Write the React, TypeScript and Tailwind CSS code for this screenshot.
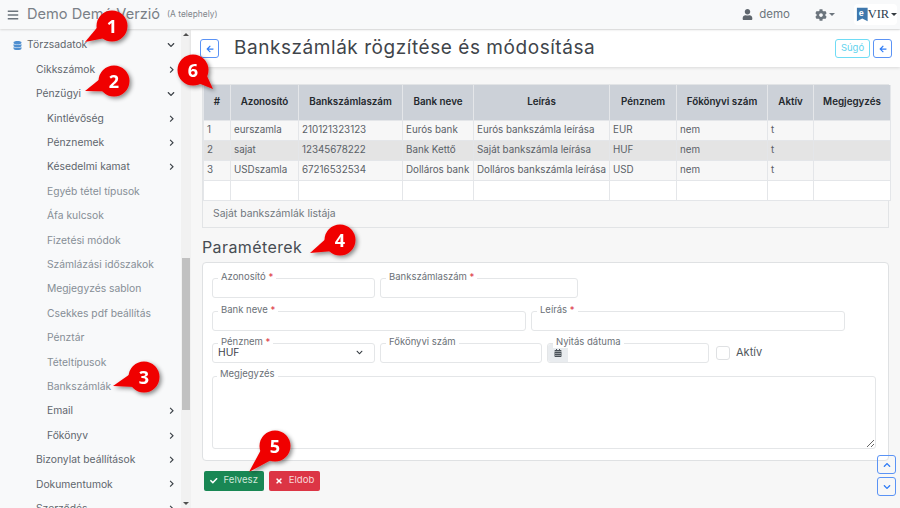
import React from 'react'
import {
  FaBars,
  FaCalendarAlt,
  FaCheck,
  FaChevronDown,
  FaChevronRight,
  FaChevronUp,
  FaCog,
  FaDatabase,
  FaTimes,
  FaUser,
  FaArrowLeft,
} from 'react-icons/fa'

const menu: { label: string; level: 0 | 1 | 2; arrow?: 'right' | 'down'; muted?: boolean }[] = [
  { label: 'Törzsadatok', level: 0, arrow: 'down' },
  { label: 'Cikkszámok', level: 1, arrow: 'right' },
  { label: 'Pénzügyi', level: 1, arrow: 'down' },
  { label: 'Kintlévőség', level: 2, arrow: 'right' },
  { label: 'Pénznemek', level: 2, arrow: 'right' },
  { label: 'Késedelmi kamat', level: 2, arrow: 'right' },
  { label: 'Egyéb tétel típusok', level: 2, muted: true },
  { label: 'Áfa kulcsok', level: 2, muted: true },
  { label: 'Fizetési módok', level: 2, muted: true },
  { label: 'Számlázási időszakok', level: 2, muted: true },
  { label: 'Megjegyzés sablon', level: 2, muted: true },
  { label: 'Csekkes pdf beállítás', level: 2, muted: true },
  { label: 'Pénztár', level: 2, muted: true },
  { label: 'Tételtípusok', level: 2, muted: true },
  { label: 'Bankszámlák', level: 2, muted: true },
  { label: 'Email', level: 2, arrow: 'right' },
  { label: 'Főkönyv', level: 2, arrow: 'right' },
  { label: 'Bizonylat beállítások', level: 1, arrow: 'right' },
  { label: 'Dokumentumok', level: 1, arrow: 'right' },
  { label: 'Szerződés', level: 1, arrow: 'right' },
]

const columns = [
  { title: '#', width: 'w-[27px]' },
  { title: 'Azonosító', width: 'w-[68px]' },
  { title: 'Bankszámlaszám', width: 'w-[104px]' },
  { title: 'Bank neve', width: 'w-[71px]' },
  { title: 'Leírás', width: 'w-[136px]' },
  { title: 'Pénznem', width: 'w-[67px]' },
  { title: 'Főkönyvi szám', width: 'w-[91px]' },
  { title: 'Aktív', width: 'w-[46px]' },
  { title: 'Megjegyzés', width: 'w-[77px]' },
]

const rows = [
  ['1', 'eurszamla', '210121323123', 'Eurós bank', 'Eurós bankszámla leírása', 'EUR', 'nem', 't', ''],
  ['2', 'sajat', '12345678222', 'Bank Kettő', 'Saját bankszámla leírása', 'HUF', 'nem', 't', ''],
  ['3', 'USDszamla', '67216532534', 'Dolláros bank', 'Dolláros bankszámla leírása', 'USD', 'nem', 't', ''],
  ['', '', '', '', '', '', '', '', ''],
]

// piros számozott buborékok a képernyőkép fölött
const callouts = [
  { n: '1', cx: 112, cy: 26, tx: 85, ty: 42 },
  { n: '2', cx: 114, cy: 81, tx: 85, ty: 91 },
  { n: '3', cx: 144, cy: 377, tx: 113, ty: 386 },
  { n: '4', cx: 340, cy: 240, tx: 310, ty: 253 },
  { n: '5', cx: 275, cy: 446, tx: 249, ty: 472 },
  { n: '6', cx: 193, cy: 70, tx: 213, ty: 89 },
]

function tailPoints(c: { cx: number; cy: number; tx: number; ty: number }) {
  const dx = c.tx - c.cx
  const dy = c.ty - c.cy
  const len = Math.hypot(dx, dy)
  const px = (-dy / len) * 11
  const py = (dx / len) * 11
  return `${c.cx + px},${c.cy + py} ${c.tx},${c.ty} ${c.cx - px},${c.cy - py}`
}

function Callouts() {
  return (
    <svg className="absolute inset-0 z-20 pointer-events-none" width="900" height="508" viewBox="0 0 900 508">
      <defs>
        <filter id="callout-shadow" x="-30%" y="-30%" width="170%" height="170%">
          <feDropShadow dx="2" dy="2" stdDeviation="2" floodColor="#000" floodOpacity="0.45" />
        </filter>
      </defs>
      {callouts.map((c) => (
        <g key={c.n} filter="url(#callout-shadow)">
          <polygon points={tailPoints(c)} fill="#f00000" />
          <circle cx={c.cx} cy={c.cy} r="15.5" fill="#f00000" />
          <text
            x={c.cx}
            y={c.cy + 6.5}
            textAnchor="middle"
            fontSize="18"
            fontWeight="700"
            fill="#fff"
            fontFamily="'Open Sans', sans-serif"
          >
            {c.n}
          </text>
        </g>
      ))}
    </svg>
  )
}

function Field({
  label,
  required,
  className,
  children,
}: {
  label: string
  required?: boolean
  className: string
  children?: React.ReactNode
}) {
  return (
    <div className={`relative h-[20px] rounded-[3px] border border-[#e4e6e8] bg-white ${className}`}>
      <span className="absolute left-[5px] top-[-8px] bg-white px-[3px] text-[9.5px] leading-[12px] text-[#6b7177] whitespace-nowrap">
        {label}
        {required && <span className="text-[#dc3545]"> *</span>}
      </span>
      {children}
    </div>
  )
}

function Sidebar() {
  return (
    <aside className="relative w-[191px] shrink-0 overflow-hidden bg-[#f8f9fa] pt-[3px]">
      <div className="w-[181px]">
        {menu.map((item) => (
          <div
            key={item.label}
            className={`flex h-[24.4px] items-center pr-[6px] text-[10.3px] ${
              item.level === 0 ? 'pl-[13px]' : item.level === 1 ? 'pl-[36px]' : 'pl-[47px]'
            } ${item.muted ? 'text-[#868e96]' : 'text-[#5f666d]'}`}
          >
            {item.level === 0 && <FaDatabase className="mr-[5px] text-[9px] text-[#4f8fd0]" />}
            <span className="flex-1 whitespace-nowrap">{item.label}</span>
            {item.arrow === 'right' && <FaChevronRight className="text-[7.5px] text-[#3d4349]" />}
            {item.arrow === 'down' && <FaChevronDown className="text-[8px] text-[#3d4349]" />}
          </div>
        ))}
      </div>
      <div className="absolute bottom-0 right-0 top-0 flex w-[10px] flex-col items-center bg-[#f1f1f1]">
        <span className="mt-[3px] h-0 w-0 border-x-[3px] border-b-[3px] border-x-transparent border-b-[#505050]" />
        <span className="mt-[222px] h-[152px] w-[8px] bg-[#c1c1c1]" />
        <span className="mt-auto mb-[3px] h-0 w-0 border-x-[3px] border-t-[3px] border-x-transparent border-t-[#505050]" />
      </div>
    </aside>
  )
}

export default function App() {
  return (
    <div className="relative flex h-[508px] w-[900px] flex-col overflow-hidden bg-[#f7f7f7] font-['Inter',sans-serif] text-[#495057]">
      <header className="z-10 flex h-[29px] shrink-0 items-center bg-[#f8f9fa] pl-[7px] pr-[3px] shadow-[0_1px_2px_rgba(0,0,0,0.12)]">
        <FaBars className="text-[12px] text-[#6c757d]" />
        <span className="ml-[8px] text-[14.6px] text-[#7a8087]">Demo Demó Verzió</span>
        <span className="ml-[7px] text-[8.4px] text-[#7f858b]">(A telephely)</span>
        <FaUser className="ml-auto text-[11px] text-[#5f666d]" />
        <span className="ml-[6px] text-[11.5px] text-[#6c757d]">demo</span>
        <FaCog className="ml-[25px] text-[12px] text-[#6c757d]" />
        <span className="ml-[2px] h-0 w-0 border-x-[3px] border-t-[3px] border-x-transparent border-t-[#6c757d]" />
        <div className="ml-[19px] flex h-[21px] w-[43px] items-center rounded-[4px] bg-white pl-[2px]">
          <svg width="38" height="18" viewBox="0 0 38 18">
            <polygon points="1,1 13,1 13,16 7,13 1,16" fill="#3f78ad" />
            <text x="3" y="10" fontSize="10" fill="#fff" fontFamily="'Liberation Sans', sans-serif" fontWeight="700">
              e
            </text>
            <text x="13" y="12" fontSize="14" fill="#2c3e50" fontFamily="'Liberation Serif', serif">
              VIR
            </text>
          </svg>
          <span className="ml-[1px] h-0 w-0 border-x-[3px] border-t-[3px] border-x-transparent border-t-[#343a40]" />
        </div>
      </header>

      <div className="flex min-h-0 flex-1 pt-px">
        <Sidebar />

        <main className="relative min-w-0 flex-1">
          <div className="flex h-[37px] items-center bg-white pl-[9px] pr-[8px] shadow-[0_1px_3px_rgba(0,0,0,0.12)]">
            <button className="flex h-[19px] w-[19px] items-center justify-center rounded-[3px] border border-[#5b93f5] text-[#2f7cf6]">
              <FaArrowLeft className="text-[8px]" />
            </button>
            <h1 className="ml-[15px] text-[19px] font-normal tracking-[0.55px] text-[#3f454b]">
              Bankszámlák rögzítése és módosítása
            </h1>
            <button className="ml-auto h-[19px] w-[35px] rounded-[3px] border border-[#6fdcf5] text-[9.5px] text-[#5fd3ee]">
              Súgó
            </button>
            <button className="ml-[3px] flex h-[19px] w-[19px] items-center justify-center rounded-[3px] border border-[#5b93f5] text-[#2f7cf6]">
              <FaArrowLeft className="text-[8px]" />
            </button>
          </div>

          <div className="pl-[11px] pr-[11px] pt-[17px]">
            <div className="border border-[#e2e4e6]">
              <table className="w-full table-fixed border-collapse text-[9.8px]">
                <colgroup>
                  {columns.map((c) => (
                    <col key={c.title} className={c.width} />
                  ))}
                </colgroup>
                <thead>
                  <tr className="h-[35px] bg-[#ccd1d8] text-[#23282d]">
                    {columns.map((c) => (
                      <th key={c.title} className="border-x border-[#e4e6e9] font-semibold">
                        {c.title}
                      </th>
                    ))}
                  </tr>
                </thead>
                <tbody>
                  {rows.map((row, i) => (
                    <tr
                      key={i}
                      className={`h-[20px] ${i === 1 ? 'bg-[#e4e4e4]' : i === 3 ? 'bg-white' : 'bg-[#f7f7f7]'}`}
                    >
                      {row.map((cell, j) => (
                        <td
                          key={j}
                          className="overflow-hidden whitespace-nowrap border border-[#e4e6e9] px-[3px] text-[#5a6167]"
                        >
                          {cell}
                        </td>
                      ))}
                    </tr>
                  ))}
                </tbody>
              </table>
              <div className="flex h-[26px] items-center pl-[10px] text-[10.4px] text-[#70767c]">
                Saját bankszámlák listája
              </div>
            </div>

            <h2 className="mt-[8px] h-[26px] text-[16px] leading-[22px] tracking-[0.4px] text-[#474d53]">
              Paraméterek
            </h2>

            <div className="h-[199px] rounded-[4px] border border-[#dfe1e3] bg-white pl-[9px] pt-[15px]">
              <div className="flex gap-[5px]">
                <Field label="Azonosító" required className="w-[163px]" />
                <Field label="Bankszámlaszám" required className="w-[198px]" />
              </div>
              <div className="mt-[13px] flex gap-[5px]">
                <Field label="Bank neve" required className="w-[314px]" />
                <Field label="Leírás" required className="w-[314px]" />
              </div>
              <div className="mt-[12px] flex items-center gap-[5px]">
                <Field label="Pénznem" required className="w-[163px]">
                  <div className="flex h-full items-center justify-between pl-[5px] pr-[11px] text-[10.3px] text-[#3f454b]">
                    HUF
                    <FaChevronDown className="text-[7px] text-[#343a40]" />
                  </div>
                </Field>
                <Field label="Főkönyvi szám" className="w-[162px]" />
                <Field label="Nyitás dátuma" className="w-[162px]">
                  <div className="flex h-full w-[20px] items-center justify-center rounded-l-[3px] bg-[#e9ecef]">
                    <FaCalendarAlt className="text-[8px] text-[#495057]" />
                  </div>
                </Field>
                <span className="ml-[2px] h-[14px] w-[14px] rounded-[3px] border border-[#dfe1e3] bg-white" />
                <span className="ml-[1px] text-[11px] text-[#50565c]">Aktív</span>
              </div>
              <div className="relative mt-[13px] h-[73px] w-[664px]">
                <span className="absolute left-[5px] top-[-8px] z-10 bg-white px-[3px] text-[9.5px] leading-[12px] text-[#6b7177]">
                  Megjegyzés
                </span>
                <textarea className="block h-full w-full rounded-[3px] border border-[#e4e6e8] bg-white" />
              </div>
            </div>

            <div className="mt-[10px] flex gap-[5px] pl-[2px]">
              <button className="flex h-[20px] w-[60px] items-center justify-center gap-[6px] rounded-[2px] bg-[#198754] text-[9.6px] text-[#cfe6da]">
                <FaCheck className="text-[7.5px] text-white" /> Felvesz
              </button>
              <button className="flex h-[20px] w-[51px] items-center justify-center gap-[6px] rounded-[2px] bg-[#dc3545] text-[9.6px] text-[#f8d7da]">
                <FaTimes className="text-[8px] text-white" /> Eldob
              </button>
            </div>
          </div>

          <div className="absolute right-[4px] top-[425px] flex flex-col gap-[3px]">
            <button className="flex h-[19px] w-[19px] items-center justify-center rounded-[3px] border border-[#5b93f5] text-[#2f7cf6]">
              <FaChevronUp className="text-[8px]" />
            </button>
            <button className="flex h-[19px] w-[19px] items-center justify-center rounded-[3px] border border-[#5b93f5] text-[#2f7cf6]">
              <FaChevronDown className="text-[8px]" />
            </button>
          </div>
        </main>
      </div>

      <Callouts />
    </div>
  )
}
